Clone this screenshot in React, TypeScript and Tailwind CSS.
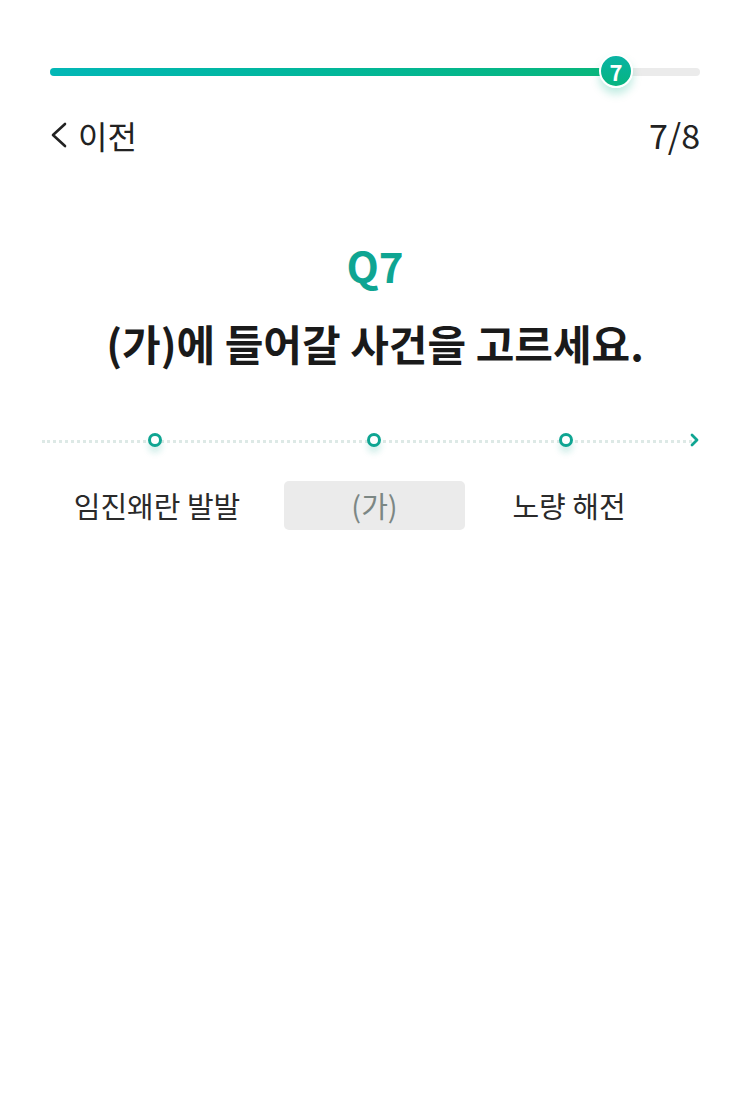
import React from 'react';

const font = { fontFamily: '"Noto Sans CJK KR", "Noto Sans", sans-serif' };

function Marker() {
  return (
    <div className="relative z-10 h-[14px] w-[14px] shrink-0 rounded-full border-[3px] border-[#0fa592] bg-white shadow-[0_6px_6px_rgba(15,165,146,0.18)]" />
  );
}

export default function App() {
  const step = 7;
  const total = 8;

  return (
    <div className="min-h-[1099px] w-[750px] bg-white text-[#222]" style={font}>
      {/* progress */}
      <div className="px-[50px] pt-[56px]">
        <div className="relative h-[34px]">
          <div className="absolute left-0 right-0 top-[12px] h-[8px] rounded-full bg-[#ebebeb]" />
          <div className="absolute left-0 top-[12px] h-[8px] w-[566px] rounded-full bg-gradient-to-r from-[#03b7b6] to-[#09b67a]" />
          <div className="absolute left-[549px] top-[-2px] flex h-[34px] w-[34px] items-center justify-center rounded-full border-2 border-white bg-gradient-to-b from-[#0ab3a4] to-[#08b47f] text-[22px] font-semibold leading-none text-white shadow-[0_6px_8px_rgba(9,180,140,0.25)]">
            {step}
          </div>
        </div>
      </div>

      {/* header */}
      <div className="mt-[28px] flex items-center justify-between px-[50px]">
        <div className="flex items-center gap-[10px] text-[32px] leading-none">
          <svg width="18" height="28" viewBox="0 0 18 28" fill="none">
            <path d="M15 3 L3 14 L15 25" stroke="#222" strokeWidth="2.6" strokeLinecap="round" strokeLinejoin="round" />
          </svg>
          <span>이전</span>
        </div>
        <div className="text-[34px] leading-none">
          {step}/{total}
        </div>
      </div>

      {/* question */}
      <div className="mt-[92px] text-center">
        <div className="text-[42px] font-bold leading-none text-[#0fa592]">Q{step}</div>
        <div className="mt-[36px] text-[42px] font-bold leading-none text-[#1a1a1a]">
          (가)에 들어갈 사건을 고르세요.
        </div>
      </div>

      {/* timeline */}
      <div className="relative mt-[68px] flex h-[16px] items-center pl-[148px] pr-[50px]">
        <div className="absolute left-[42px] right-[58px] top-1/2 border-t-[3px] border-dotted border-[#dde9e6]" />
        <Marker />
        <div className="w-[205px]" />
        <Marker />
        <div className="w-[178px]" />
        <Marker />
        <div className="flex-1" />
        <svg className="relative z-10" width="10" height="14" viewBox="0 0 10 14" fill="none">
          <path d="M2 2 L7 7 L2 12" stroke="#0fa592" strokeWidth="2.8" strokeLinecap="round" strokeLinejoin="round" />
        </svg>
      </div>

      <div className="mt-[33px] flex items-center pl-[30px]">
        <div className="w-[254px] text-center text-[29px] leading-none text-[#2a2a2a]">임진왜란 발발</div>
        <div className="flex h-[49px] w-[181px] items-center justify-center rounded-[5px] bg-[#ebebeb] text-[29px] text-[#7c8784]">
          (가)
        </div>
        <div className="w-[208px] text-center text-[29px] leading-none text-[#2a2a2a]">노량 해전</div>
      </div>
    </div>
  );
}
